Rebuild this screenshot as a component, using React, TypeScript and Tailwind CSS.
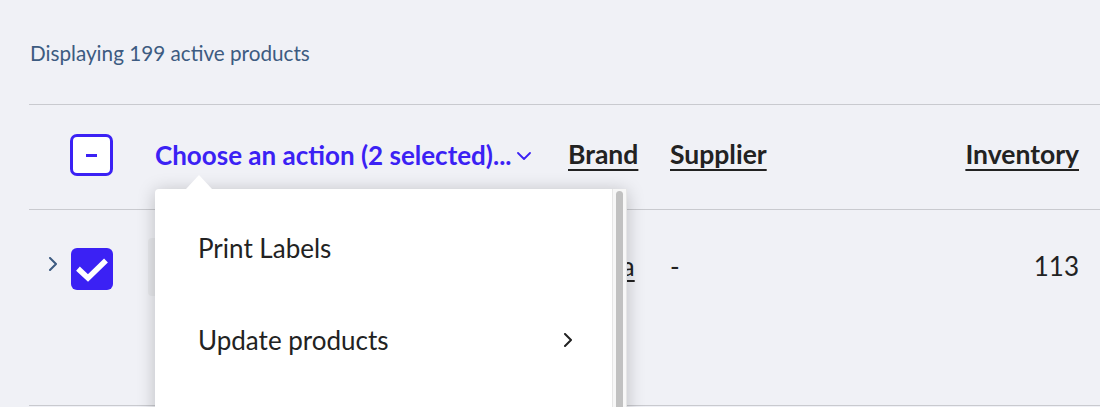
function HeaderCheckbox() {
  return (
    <div className="flex h-[42px] w-[43px] items-center justify-center rounded-[7px] border-[3px] border-[#3b21f4] bg-white">
      <span className="block h-[3px] w-[11px] bg-[#3b21f4]" />
    </div>
  )
}

function CheckedBox() {
  return (
    <div className="flex h-[42px] w-[42px] items-center justify-center rounded-[6px] bg-[#3b21f4]">
      <svg width="42" height="42" viewBox="0 0 42 42" fill="none">
        <path d="M9 22.5 L17 30 L33 14.5" stroke="white" strokeWidth="5.5" strokeLinecap="square" strokeLinejoin="miter" />
      </svg>
    </div>
  )
}

function Chevron({ dir, className }: { dir: 'right' | 'down'; className?: string }) {
  if (dir === 'down') {
    return (
      <svg width="14" height="8" viewBox="0 0 14 8" fill="none" className={className}>
        <path d="M1 1 L7 7 L13 1" stroke="currentColor" strokeWidth="1.8" strokeLinecap="round" strokeLinejoin="round" />
      </svg>
    )
  }
  return (
    <svg width="10" height="14" viewBox="0 0 10 14" fill="none" className={className}>
      <path d="M2 1 L8 7 L2 13" stroke="currentColor" strokeWidth="2" strokeLinecap="round" strokeLinejoin="round" />
    </svg>
  )
}

function ActionMenu() {
  return (
    <div className="absolute left-0 top-[84px] z-10">
      <div className="absolute left-[31px] top-[-14px] h-0 w-0 border-x-[13px] border-b-[14px] border-x-transparent border-b-white" />
      <div className="flex h-[260px] w-[472px] rounded-t-[4px] bg-white shadow-[0_2px_18px_rgba(0,0,0,0.22)]">
        <div className="flex-1 pt-[13px]">
          <div className="flex h-[92px] items-center pl-[43px] text-[26px] text-[#222]">Print Labels</div>
          <div className="flex h-[92px] items-center justify-between pl-[43px] pr-[39px] text-[26px] text-[#222]">
            <span>Update products</span>
            <Chevron dir="right" className="text-[#222]" />
          </div>
        </div>
        <div className="w-[15px] border-x border-[#e6e6e6] bg-[#f7f7f7] px-[3px] pt-[2px]">
          <div className="h-full rounded-t-full bg-[#c1c1c1]" />
        </div>
      </div>
    </div>
  )
}

export default function App() {
  return (
    <div className="h-[407px] overflow-hidden bg-[#f0f1f6] font-['Lato',sans-serif]">
      <div className="pl-[29px]">
        <div className="h-[104px] pl-px pt-[38px] text-[20.7px] text-[#3d5b81]">Displaying 199 active products</div>
        <div className="border-t border-[#c9cacf]">
          <div className="flex h-[105px] items-center border-b border-[#c9cacf] pb-[4px]">
            <div className="w-[126px] pl-[41px]">
              <HeaderCheckbox />
            </div>
            <div className="relative flex w-[413px] items-center self-stretch">
              <button type="button" className="flex items-center gap-[5px] text-[26px] font-bold text-[#3b21f4]">
                Choose an action (2 selected)...
                <Chevron dir="down" className="mt-[1px]" />
              </button>
              <ActionMenu />
            </div>
            <div className="w-[102px] text-[26.5px] font-bold text-[#222] underline decoration-[2px] underline-offset-[5px]">Brand</div>
            <div className="flex-1 text-[26.5px] font-bold text-[#222] underline decoration-[2px] underline-offset-[5px]">Supplier</div>
            <div className="pr-[21px] text-[26.5px] font-bold text-[#222] underline decoration-[2px] underline-offset-[5px]">Inventory</div>
          </div>
          <div className="h-[196px] border-b border-[#c9cacf]">
            <div className="flex h-[118px] items-center">
              <div className="flex w-[119px] items-center pl-[19px]">
                <Chevron dir="right" className="mb-[10px] text-[#3d5b81]" />
                <div className="ml-[13px]">
                  <CheckedBox />
                </div>
              </div>
              <div className="mb-[5px] flex w-[420px] items-center gap-[4px]">
                <div className="h-[58px] w-[58px] rounded bg-[#e7e8ec]" />
                <span className="text-[26px] text-[#222]">Jade Pot</span>
              </div>
              <div className="mb-[5px] w-[102px] text-[26px] text-[#222] underline underline-offset-[4px]">Nuvia</div>
              <div className="mb-[5px] flex-1 text-[26px] text-[#222]">-</div>
              <div className="mb-[5px] pr-[21px] text-[26px] text-[#222]">113</div>
            </div>
          </div>
        </div>
      </div>
    </div>
  )
}
